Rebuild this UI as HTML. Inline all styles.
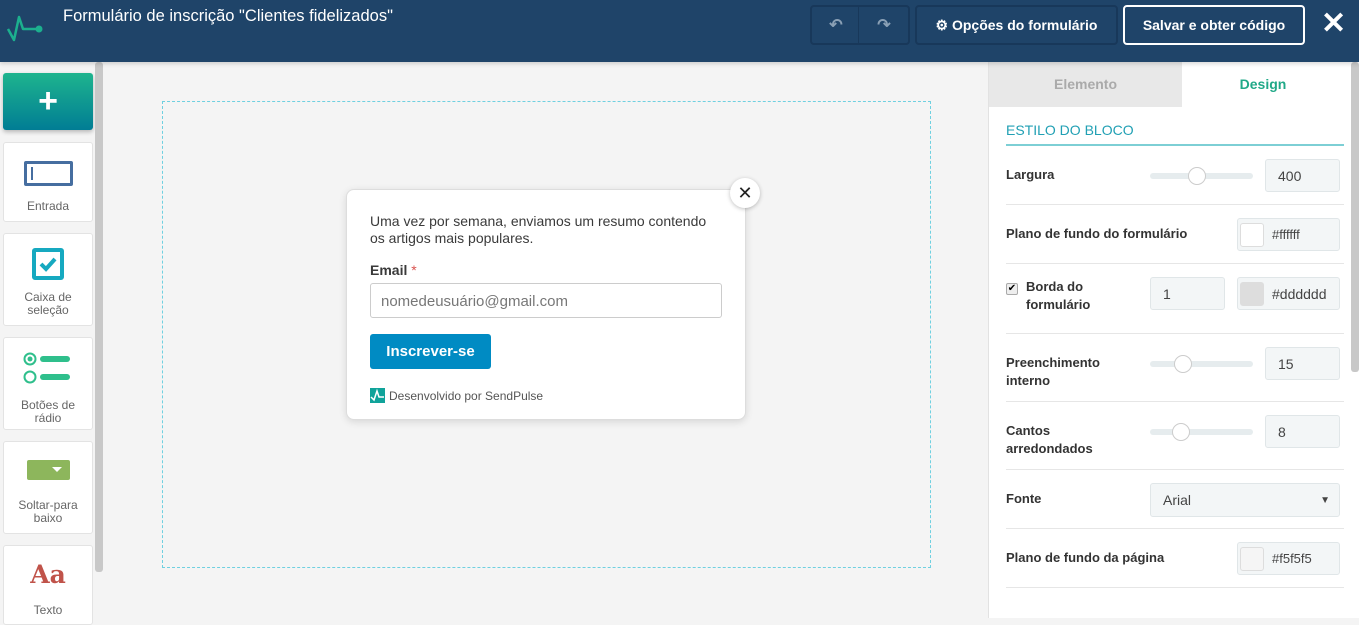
<!DOCTYPE html>
<html><head><meta charset="utf-8"><style>
*{box-sizing:border-box;margin:0;padding:0}
body{width:1359px;height:618px;overflow:hidden;background:#f4f4f4;font-family:"Liberation Sans",Arial,sans-serif;position:relative}
.hdr{position:absolute;left:0;top:0;width:1359px;height:62px;background:#1f4469;box-shadow:0 2px 4px rgba(0,0,0,.15);z-index:2}
.title{position:absolute;left:63px;top:7px;color:#fff;font-size:16.5px}
.btn{position:absolute;top:5px;height:40px;border:2px solid #18385a;border-radius:4px;color:#fff;font-weight:bold;font-size:14px;display:flex;align-items:center;justify-content:center}
.side{position:absolute;left:0;top:62px;width:103px;height:556px;background:#f4f4f4}
.card{position:absolute;left:3px;width:90px;background:#fff;border:1px solid #e3e3e3;border-radius:3px;text-align:center;font-size:12px;color:#666;line-height:13px}
.rp{position:absolute;left:988px;top:62px;width:371px;height:556px;background:#fff;border-left:1px solid #e2e2e2}
.row{position:absolute;left:17px;width:338px;border-bottom:1px solid #e6e6e6}
.lbl{position:absolute;left:1006px;font-size:13px;font-weight:bold;color:#333;line-height:18px}
.inp{position:absolute;background:#f3f6f7;border:1px solid #e0e6e8;border-radius:3px;font-size:14px;color:#444;padding-left:12px;display:flex;align-items:center}
.sl{position:absolute;left:1150px;width:103px;height:6px;background:#e6ecee;border-radius:3px}
.kn{position:absolute;width:18px;height:18px;border-radius:50%;background:#fff;border:1px solid #ccc;top:-6px}
.sw{width:24px;height:24px;border-radius:3px;border:1px solid #ddd;margin-left:-10px;margin-right:8px}
</style></head><body>
<div class="hdr">
<svg style="position:absolute;left:7px;top:8px" width="38" height="34" viewBox="0 0 38 34"><path d="M1 21 L7 32 L12 9 L16 21 L31 21" fill="none" stroke="#1cb08e" stroke-width="2.5" stroke-linejoin="round"/><circle cx="32" cy="21" r="3.5" fill="#1cb08e"/></svg>
<div class="title">Formulário de inscrição "Clientes fidelizados"</div>
<div class="btn" style="left:810px;width:100px;justify-content:space-around;color:#8aa0b5;font-size:16px"><span>↶</span><span style="position:absolute;left:46px;top:0;bottom:0;border-left:1px solid #18385a"></span><span>↷</span></div>
<div class="btn" style="left:915px;width:203px">⚙ Opções do formulário</div>
<div class="btn" style="left:1123px;width:182px;border-color:#fff">Salvar e obter código</div>
<div style="position:absolute;left:1321px;top:6px;color:#fff;font-size:30px;font-weight:bold">✕</div>
</div>
<div class="side">
<div style="position:absolute;left:3px;top:11px;width:90px;height:57px;border-radius:3px;background:linear-gradient(#1eb48e,#017d94);box-shadow:0 2px 4px rgba(0,0,0,.25);color:#fff;font-size:34px;font-weight:bold;text-align:center;line-height:56px">+</div>
<div style="position:absolute;left:95px;top:0;width:8px;height:510px;background:#c8c8c8;border-radius:3px"></div>
<div class="card" style="top:80px;height:80px"><div style="margin:18px auto 0;width:49px;height:25px;border:3px solid #466ea0;border-radius:2px;position:relative"><div style="position:absolute;left:4px;top:3px;width:2px;height:13px;background:#466ea0"></div></div><div style="margin-top:14px">Entrada</div></div>
<div class="card" style="top:171px;height:93px"><svg width="32" height="32" style="margin-top:14px" viewBox="0 0 32 32"><rect x="2" y="2" width="28" height="28" rx="1" fill="none" stroke="#16a9c0" stroke-width="4"/><path d="M9 16 L14 21 L23 11" fill="none" stroke="#16a9c0" stroke-width="4"/></svg><div style="margin-top:8px">Caixa de<br>seleção</div></div>
<div class="card" style="top:275px;height:93px"><svg width="50" height="32" style="margin-top:14px" viewBox="0 0 50 32"><circle cx="7" cy="7" r="5.5" fill="none" stroke="#2fbf8c" stroke-width="2"/><circle cx="7" cy="7" r="2.5" fill="#2fbf8c"/><circle cx="7" cy="25" r="5.5" fill="none" stroke="#2fbf8c" stroke-width="2"/><rect x="17" y="4" width="30" height="6" rx="3" fill="#2fbf8c"/><rect x="17" y="22" width="30" height="6" rx="3" fill="#2fbf8c"/></svg><div style="margin-top:12px">Botões de<br>rádio</div></div>
<div class="card" style="top:379px;height:93px"><div style="margin:18px auto 0;width:43px;height:20px;background:#8db65c;border-radius:2px;position:relative"><div style="position:absolute;right:8px;top:7px;border:5px solid transparent;border-top:5px solid #fff;border-bottom:0"></div></div><div style="margin-top:19px">Soltar-para<br>baixo</div></div>
<div class="card" style="top:483px;height:80px"><div style="margin-top:14px;font-family:'DejaVu Serif',serif;font-weight:bold;font-size:25px;color:#c0534a;line-height:30px">Aa</div><div style="margin-top:14px">Texto</div></div>
</div>
<div style="position:absolute;left:162px;top:101px;width:769px;height:467px;border:1px dashed #6fd0e0"></div>
<div style="position:absolute;left:346px;top:189px;width:400px;height:231px;background:#fff;border:1px solid #ddd;border-radius:8px;box-shadow:0 2px 8px rgba(0,0,0,.12)">
<div style="position:absolute;left:23px;top:23px;font-size:14px;color:#3a3a3a;line-height:17px">Uma vez por semana, enviamos um resumo contendo<br>os artigos mais populares.</div>
<div style="position:absolute;left:23px;top:72px;font-size:14px;font-weight:bold;color:#3a3a3a">Email <span style="color:#d9534f;font-weight:normal">*</span></div>
<div style="position:absolute;left:23px;top:93px;width:352px;height:35px;border:1px solid #ccc;border-radius:3px;font-size:15px;color:#777;padding:9px 10px">nomedeusuário@gmail.com</div>
<div style="position:absolute;left:23px;top:144px;width:121px;height:35px;background:#008bc3;border-radius:3px;color:#fff;font-weight:bold;font-size:15px;text-align:center;line-height:35px">Inscrever-se</div>
<div style="position:absolute;left:23px;top:198px;font-size:12px;color:#555;display:flex;align-items:center"><svg width="15" height="15" viewBox="0 0 15 15" style="margin-right:4px"><rect width="15" height="15" fill="#10a39a"/><path d="M1 9 L4 12 L7 3 L9 9 L14 9" fill="none" stroke="#fff" stroke-width="1.5"/></svg>Desenvolvido por SendPulse</div>
<div style="position:absolute;left:383px;top:-12px;width:30px;height:30px;border-radius:50%;background:#fff;box-shadow:0 1px 4px rgba(0,0,0,.25);text-align:center;line-height:30px;font-size:18px;color:#222">✕</div>
</div>
<div class="rp">
<div style="position:absolute;left:0;top:0;width:193px;height:45px;background:#e8e8e8;color:#aaa;font-weight:bold;font-size:14px;text-align:center;line-height:45px">Elemento</div>
<div style="position:absolute;left:193px;top:0;width:162px;height:45px;color:#21a988;font-weight:bold;font-size:14px;text-align:center;line-height:45px">Design</div>
<div style="position:absolute;left:17px;top:60px;font-size:14px;color:#21a0b4">ESTILO DO BLOCO</div>
<div style="position:absolute;left:17px;top:82px;width:338px;height:2px;background:#7dcfd5"></div>
<div class="row" style="top:84px;height:59px"></div>
<div class="row" style="top:143px;height:59px"></div>
<div class="row" style="top:202px;height:70px"></div>
<div class="row" style="top:272px;height:68px"></div>
<div class="row" style="top:340px;height:68px"></div>
<div class="row" style="top:408px;height:59px"></div>
<div class="row" style="top:467px;height:59px"></div>
<div style="position:absolute;right:0;top:0;width:8px;height:310px;background:#c8c8c8;border-radius:3px"></div>
</div>
<div class="lbl" style="top:166px">Largura</div>
<div class="sl" style="top:173px"><div class="kn" style="left:38px"></div></div>
<div class="inp" style="left:1265px;top:159px;width:75px;height:33px">400</div>
<div class="lbl" style="top:225px">Plano de fundo do formulário</div>
<div class="inp" style="left:1237px;top:218px;width:103px;height:33px;font-size:13px"><div class="sw" style="background:#fff"></div>#ffffff</div>
<div style="position:absolute;left:1006px;top:283px;width:12px;height:12px;border:1px solid #aaa;border-radius:2px;background:#eee;font-size:10px;line-height:10px;text-align:center">✔</div>
<div class="lbl" style="left:1026px;top:278px">Borda do<br>formulário</div>
<div class="inp" style="left:1150px;top:277px;width:75px;height:33px">1</div>
<div class="inp" style="left:1237px;top:277px;width:103px;height:33px"><div class="sw" style="background:#ddd"></div>#dddddd</div>
<div class="lbl" style="top:354px">Preenchimento<br>interno</div>
<div class="sl" style="top:361px"><div class="kn" style="left:24px"></div></div>
<div class="inp" style="left:1265px;top:347px;width:75px;height:33px">15</div>
<div class="lbl" style="top:422px">Cantos<br>arredondados</div>
<div class="sl" style="top:429px"><div class="kn" style="left:22px"></div></div>
<div class="inp" style="left:1265px;top:415px;width:75px;height:33px">8</div>
<div class="lbl" style="top:490px">Fonte</div>
<div class="inp" style="left:1150px;top:483px;width:190px;height:34px">Arial<span style="position:absolute;right:9px;font-size:10px">▼</span></div>
<div class="lbl" style="top:549px">Plano de fundo da página</div>
<div class="inp" style="left:1237px;top:542px;width:103px;height:33px;font-size:13px"><div class="sw" style="background:#f5f5f5"></div>#f5f5f5</div>
</body></html>
